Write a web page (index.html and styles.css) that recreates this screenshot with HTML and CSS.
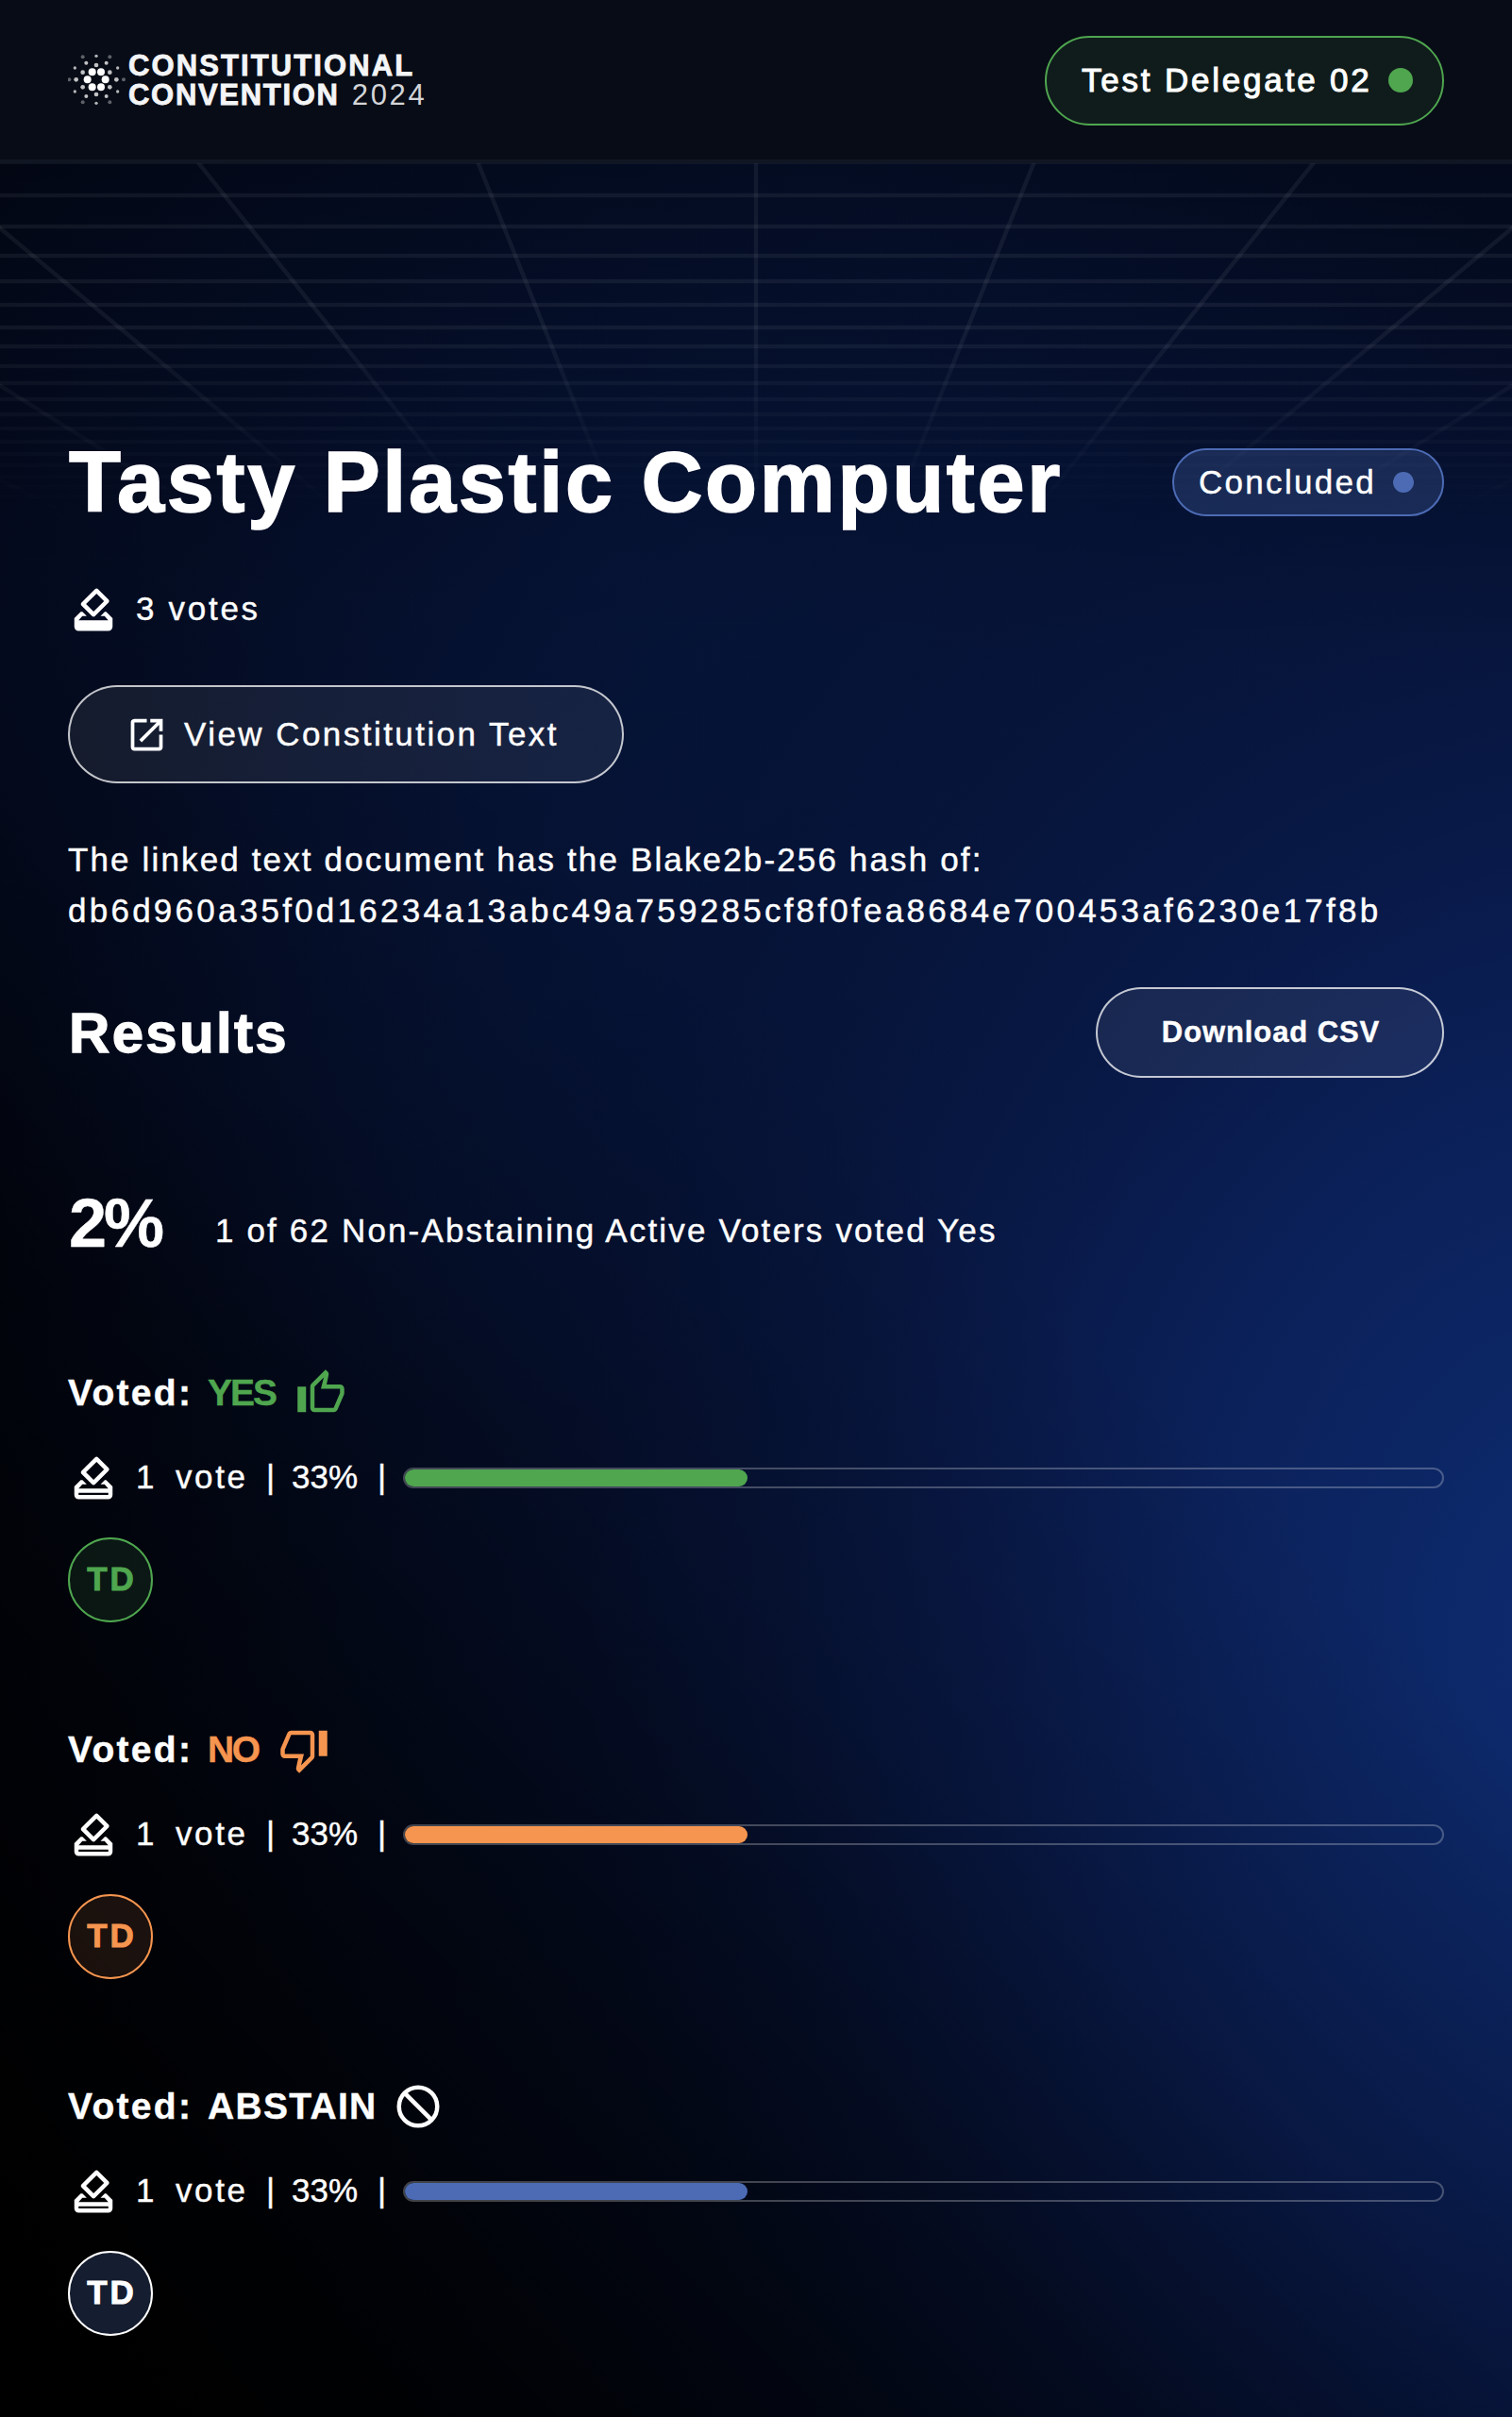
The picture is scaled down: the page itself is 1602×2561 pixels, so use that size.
FILE: index.html
```html
<!DOCTYPE html>
<html lang="en">
<head>
<meta charset="utf-8">
<title>Tasty Plastic Computer</title>
<link rel="stylesheet" href="styles.css">
</head>
<body>
<svg class="defs" width="0" height="0" aria-hidden="true">
  <symbol id="ballot" viewBox="0 0 24 24"><path d="M18 13h-.68l-2 2h1.91L19 17H5l1.78-2h2.05l-2-2H6l-3 3v4c0 1.1.89 2 1.99 2H19c1.1 0 2-.89 2-2v-4l-3-3zm1 7H5v-1h14v1zm-7.66-4.98c.39.39 1.02.39 1.41 0l6.36-6.36c.39-.39.39-1.02 0-1.41L14.16 2.3c-.38-.4-1.01-.4-1.4-.01L6.39 8.66c-.39.39-.39 1.02 0 1.41l4.95 4.95zm2.12-10.61L17 7.95l-4.95 4.95-3.54-3.54 4.95-4.95z"/></symbol>
</svg>
<div class="page">
  <svg class="grid" width="1602" height="390" viewBox="0 170 1602 390" aria-hidden="true">
    <g class="grid-lines">
      <path d="M0 171.500H1602M0 207H1602M0 240H1602M0 271H1602M0 298H1602M0 323H1602M0 347H1602M0 367H1602M0 388H1602M0 406H1602M0 423H1602M0 439H1602M0 454H1602M0 468H1602M0 481H1602M0 493H1602M0 505H1602M0 516H1602M0 526H1602M0 536H1602"/>
      <path d="M801 171V560M506 171L662 560M209 171L520 560M-85 171L382 560M-380 171L242 560M-675 171L103 560M1096 171L940 560M1393 171L1082 560M1687 171L1220 560M1982 171L1360 560M2277 171L1499 560"/>
    </g>
  </svg>
  <header class="header">
    <div class="logo">
      <svg width="62" height="56" viewBox="66 78 186 168" fill="#fff" aria-hidden="true">
        <g><circle cx="143" cy="139" r="12"/><circle cx="171" cy="139" r="12"/><circle cx="128" cy="163" r="12"/><circle cx="185" cy="163" r="12"/><circle cx="143" cy="187" r="12"/><circle cx="171" cy="187" r="12"/></g>
        <g opacity=".75"><circle cx="156" cy="117" r="7"/><circle cx="156" cy="210" r="7"/><circle cx="113" cy="140" r="7"/><circle cx="199" cy="140" r="7"/><circle cx="113" cy="187" r="7"/><circle cx="199" cy="187" r="7"/><circle cx="124" cy="110" r="6"/><circle cx="188" cy="110" r="6"/><circle cx="92" cy="163" r="7"/><circle cx="220" cy="163" r="7"/><circle cx="124" cy="216" r="6"/><circle cx="188" cy="216" r="6"/></g>
        <g opacity=".7"><circle cx="88" cy="126" r="5"/><circle cx="224" cy="126" r="5"/><circle cx="88" cy="201" r="5"/><circle cx="224" cy="201" r="5"/><circle cx="156" cy="88" r="5"/><circle cx="156" cy="238" r="5"/></g>
        <g opacity=".35"><circle cx="113" cy="91" r="6"/><circle cx="199" cy="91" r="6"/><circle cx="113" cy="235" r="6"/><circle cx="199" cy="235" r="6"/><circle cx="70" cy="163" r="6"/><circle cx="243" cy="163" r="6"/></g>
      </svg>
      <div class="logo-text">
        <div class="logo-top">CONSTITUTIONAL</div>
        <div class="logo-bottom"><span>CONVENTION</span><span class="year">2024</span></div>
      </div>
    </div>
    <div class="pill user"><span>Test Delegate 02</span><i class="dot"></i></div>
  </header>
  <main class="main">
    <div class="row title-row">
      <h1>Tasty Plastic Computer</h1>
      <div class="pill status"><span>Concluded</span><i class="dot"></i></div>
    </div>
    <div class="votes">
      <svg class="icon" viewBox="0 0 24 24"><path d="M18 13h-.68l-2 2h1.91L19 17H5l1.78-2h2.05l-2-2H6l-3 3v4c0 1.100.89 2 1.990 2H19c1.100 0 2-.89 2-2v-4l-3-3zm-1-5.050l-4.950 4.950-3.540-3.540 4.950-4.950L17 7.950zm-4.240-5.660L6.390 8.660c-.39.39-.39 1.020 0 1.410l4.950 4.950c.39.39 1.020.39 1.410 0l6.360-6.360c.39-.39.39-1.020 0-1.410L14.160 2.300c-.38-.4-1.010-.4-1.400-.01z"/></svg>
      <span class="votes-label">3 votes</span>
    </div>
    <a class="button view">
      <svg viewBox="0 0 24 24"><path d="M19 19H5V5h7V3H5c-1.110 0-2 .9-2 2v14c0 1.100.89 2 2 2h14c1.100 0 2-.9 2-2v-7h-2v7zM14 3v2h3.590l-9.830 9.830 1.410 1.410L19 6.410V10h2V3h-7z"/></svg>
      <span>View Constitution Text</span>
    </a>
    <p class="hash"><span class="hash-label">The linked text document has the Blake2b-256 hash of:</span><br><span class="hash-value">db6d960a35f0d16234a13abc49a759285cf8f0fea8684e700453af6230e17f8b</span></p>
    <div class="row results-row">
      <h2>Results</h2>
      <a class="button download">Download CSV</a>
    </div>
    <div class="summary">
      <strong>2%</strong>
      <span>1 of 62 Non-Abstaining Active Voters voted Yes</span>
    </div>
    <section class="option yes">
      <h3><span class="voted">Voted:</span><span class="choice">YES</span>
        <svg class="icon" viewBox="0 0 24 24"><path d="M9 21h9c.83 0 1.540-.5 1.840-1.220l3.020-7.050c.09-.23.14-.47.14-.73v-2c0-1.100-.9-2-2-2h-6.310l.95-4.570.03-.32c0-.41-.17-.79-.44-1.060L14.170 1 7.580 7.590C7.220 7.950 7 8.450 7 9v10c0 1.100.9 2 2 2zM9 9l4.340-4.340L12 10h9v2l-3 7H9V9zM1 9h4v12H1z"/></svg></h3>
      <div class="tally"><svg class="icon"><use href="#ballot"/></svg><span class="count">1</span><span class="unit">vote</span><span class="bar">|</span><span class="pct">33%</span><span class="bar">|</span><div class="track"><div class="fill"></div></div></div>
      <div class="avatar">TD</div>
    </section>
    <section class="option no">
      <h3><span class="voted">Voted:</span><span class="choice">NO</span>
        <svg class="icon" viewBox="0 0 24 24"><path d="M15 3H6c-.83 0-1.540.5-1.840 1.220l-3.020 7.050c-.09.23-.14.47-.14.73v2c0 1.100.9 2 2 2h6.310l-.95 4.570-.03.32c0 .41.17.79.44 1.060L9.830 23l6.590-6.590c.36-.36.58-.86.58-1.410V5c0-1.100-.9-2-2-2zm0 12l-4.340 4.340L12 14H3v-2l3-7h9v10zm4-12h4v12h-4z"/></svg></h3>
      <div class="tally"><svg class="icon"><use href="#ballot"/></svg><span class="count">1</span><span class="unit">vote</span><span class="bar">|</span><span class="pct">33%</span><span class="bar">|</span><div class="track"><div class="fill"></div></div></div>
      <div class="avatar">TD</div>
    </section>
    <section class="option abstain">
      <h3><span class="voted">Voted:</span><span class="choice">ABSTAIN</span>
        <svg class="icon" viewBox="0 0 24 24"><path class="stroke" d="M3 12a9 9 0 1 0 18 0a9 9 0 1 0 -18 0M5.600 5.600L18.400 18.400"/></svg></h3>
      <div class="tally"><svg class="icon"><use href="#ballot"/></svg><span class="count">1</span><span class="unit">vote</span><span class="bar">|</span><span class="pct">33%</span><span class="bar">|</span><div class="track"><div class="fill"></div></div></div>
      <div class="avatar">TD</div>
    </section>
  </main>
</div>
</body>
</html>
```
FILE: styles.css
```css
* { box-sizing: border-box; }
body {
  margin: 0;
  background: #000;
  color: #fff;
  font-family: "Liberation Sans", Arial, sans-serif;
  font-size: 35px;
  -webkit-text-stroke: .4px currentColor;
}
.defs { position: absolute; }
.page {
  position: relative;
  width: 1602px;
  height: 2561px;
  overflow: hidden;
  background:
    radial-gradient(ellipse 1000px 900px at 650px 600px, rgba(6,24,66,.5) 0, rgba(6,24,66,.3) 50%, rgba(6,24,66,0) 100%),
    linear-gradient(180deg, rgba(0,0,0,.4) 174px, rgba(0,0,0,0) 700px),
    linear-gradient(45deg, #000 0, rgba(0,0,0,.93) 10%, rgba(0,0,0,.66) 22%, rgba(0,0,0,.22) 40%, rgba(0,0,0,0) 56%),
    radial-gradient(ellipse 1750px 2200px at 1700px 1740px, #0d2b72 0, #0d296a 8%, #0b215a 25%, #091a4a 38%, #07153c 50%, #061132 62%, #050f2b 75%, #040a1e 90%, #030716 100%);
}
.grid {
  position: absolute;
  left: 0;
  top: 170px;
  -webkit-mask-image: linear-gradient(#000 45%, transparent 97%);
  mask-image: linear-gradient(#000 45%, transparent 97%);
}
.grid-lines { fill: none; stroke: rgba(255,255,255,.06); stroke-width: 4.5; }
.header {
  position: relative;
  display: flex;
  justify-content: space-between;
  align-items: center;
  height: 173px;
  padding: 1px 72px 0;
  background: #080c16;
  border-bottom: 4px solid #111623;
}
.logo { display: flex; gap: 2px; align-items: center; margin-top: -2px; }
.logo-text { padding-top: 2px; font-size: 31px; font-weight: 700; line-height: 31px; color: #f4f5f6; -webkit-text-stroke: .8px currentColor; }
.logo-top { letter-spacing: 2.100px; }
.logo-bottom { display: flex; letter-spacing: 1.700px; }
.year { margin-left: 13px; font-weight: 400; letter-spacing: 2.700px; color: #d3d5d8; -webkit-text-stroke: 0; }
.pill { display: flex; align-items: center; border: 2px solid; border-radius: 60px; }
.pill .dot { border-radius: 50%; }
.user {
  width: 423px;
  height: 95px;
  padding: 0 31px 0 37px;
  justify-content: space-between;
  border-color: #4fa64f;
  background: #101c1c;
  letter-spacing: 2.800px;
  -webkit-text-stroke: 1px #fff;
}
.user .dot { width: 26px; height: 26px; background: #4fa64f; }
.main { position: relative; padding: 283px 72px 0; }
.row { display: flex; justify-content: space-between; align-items: center; }
.title-row { height: 109px; }
h1, h2, h3, p { margin: 0; }
h1 { padding-left: 1px; font-size: 90px; letter-spacing: 2.700px; line-height: 108px; white-space: nowrap; -webkit-text-stroke: 1.600px #fff; }
.status {
  width: 288px;
  height: 72px;
  padding: 0 30px 0 26px;
  justify-content: space-between;
  border-color: #4c6bb4;
  background: rgba(76,107,180,.28);
  letter-spacing: 2.300px;
}
.status .dot { width: 22px; height: 22px; background: #4c6bb4; }
.icon { display: block; width: 54px; height: 54px; flex: none; fill: currentColor; }
.votes { display: flex; align-items: center; gap: 18px; margin-top: 54px; height: 54px; letter-spacing: 2.700px; }
.votes-label { padding-bottom: 2px; }
.button {
  display: flex;
  align-items: center;
  justify-content: center;
  border: 2px solid rgba(255,255,255,.75);
  border-radius: 60px;
  background: rgba(255,255,255,.07);
}
.view { width: 589px; height: 104px; margin-top: 53px; padding-right: 8px; gap: 17px; letter-spacing: 2.450px; }
.view svg { width: 45px; height: 45px; fill: #fff; }
.hash { margin-top: 54px; line-height: 54px; white-space: nowrap; }
.hash-label { letter-spacing: 2.140px; }
.hash-value { letter-spacing: 3.250px; }
.results-row { margin-top: 54px; height: 96px; }
h2 { padding-left: 1px; font-size: 60px; letter-spacing: 2.300px; -webkit-text-stroke: 1.300px #fff; }
.download { width: 369px; height: 96px; padding-left: 2px; font-size: 31px; font-weight: 700; letter-spacing: .9px; }
.summary { display: flex; height: 72px; margin-top: 118px; align-items: flex-start; }
.summary strong { width: 156px; padding-left: 1px; font-size: 72px; line-height: 72px; letter-spacing: -3px; }
.summary span { padding-top: 16px; line-height: 56px; letter-spacing: 2.150px; }
.option { margin-top: 108px; }
.summary + .option { margin-top: 117px; }
.option h3 { display: flex; align-items: center; height: 54px; font-size: 39px; font-weight: 700; }
.voted { width: 148px; letter-spacing: 2.300px; }
.choice { color: var(--tone); }
.option h3 .icon { color: var(--tone); margin-left: 1px; }
.yes { --tone: #4fa64f; --fill: #4fa64f; --disc: rgba(79,166,79,.12); }
.no { --tone: #f6954f; --fill: #f6954f; --disc: rgba(246,149,79,.11); }
.abstain { --tone: #fff; --fill: #4c6bb4; --disc: #151d30; }
.yes .choice { width: 92px; letter-spacing: -2px; }
.no .choice { width: 74px; letter-spacing: -2.500px; }
.abstain .choice { width: 195px; letter-spacing: 1.300px; }
.stroke { fill: none; stroke: #fff; stroke-width: 2; }
.tally { display: flex; align-items: center; height: 54px; margin-top: 36px; }
.tally > span { padding-bottom: 2px; }
.count { width: 42px; margin-left: 18px; }
.unit { width: 96px; letter-spacing: 2.600px; }
.pct { width: 91px; }
.bar { width: 27px; }
.pct + .bar { width: 27px; }
.track { flex: 1; height: 22px; border: 2px solid rgba(255,255,255,.25); border-radius: 11px; }
.fill { width: 33%; height: 18px; border-radius: 9px; background: var(--fill); }
.avatar {
  display: flex;
  align-items: center;
  justify-content: center;
  width: 90px;
  height: 90px;
  margin-top: 36px;
  padding: 0 0 2px 3px;
  border: 2px solid var(--tone);
  border-radius: 50%;
  background: var(--disc);
  color: var(--tone);
  font-weight: 700;
  letter-spacing: 3px;
  -webkit-text-stroke: .9px currentColor;
}
```
